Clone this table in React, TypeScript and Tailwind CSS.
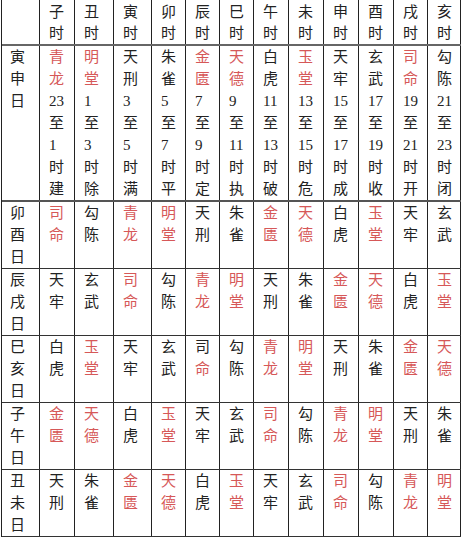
const hours = ["子", "丑", "寅", "卯", "辰", "巳", "午", "未", "申", "酉", "戌", "亥"];

const colClasses = [
  "w-[38px]",
  "w-[35px]",
  "w-[39px]",
  "w-[38px]",
  "w-[34px]",
  "w-[34px]",
  "w-[34px]",
  "w-[35px]",
  "w-[35px]",
  "w-[35px]",
  "w-[35px]",
  "w-[34px]",
  "w-[33px]",
];

// each cell: god name plus which of its two chars are red
type Cell = { god: string; red: string };

const R = (god: string): Cell => ({ god, red: "11" });
const B = (god: string): Cell => ({ god, red: "00" });

const firstRow = [
  { cell: R("青龙"), from: "23", to: "1", tail: "建" },
  { cell: R("明堂"), from: "1", to: "3", tail: "除" },
  { cell: B("天刑"), from: "3", to: "5", tail: "满" },
  { cell: B("朱雀"), from: "5", to: "7", tail: "平" },
  { cell: R("金匮"), from: "7", to: "9", tail: "定" },
  { cell: R("天德"), from: "9", to: "11", tail: "执" },
  { cell: B("白虎"), from: "11", to: "13", tail: "破" },
  { cell: R("玉堂"), from: "13", to: "15", tail: "危" },
  { cell: B("天牢"), from: "15", to: "17", tail: "成" },
  { cell: B("玄武"), from: "17", to: "19", tail: "收" },
  { cell: R("司命"), from: "19", to: "21", tail: "开" },
  { cell: B("勾陈"), from: "21", to: "23", tail: "闭" },
];

const rows: { label: string; cells: Cell[] }[] = [
  {
    label: "卯酉日",
    cells: [R("司命"), B("勾陈"), R("青龙"), R("明堂"), B("天刑"), B("朱雀"), R("金匮"), R("天德"), B("白虎"), R("玉堂"), B("天牢"), B("玄武")],
  },
  {
    label: "辰戌日",
    cells: [B("天牢"), B("玄武"), R("司命"), B("勾陈"), R("青龙"), R("明堂"), B("天刑"), B("朱雀"), R("金匮"), R("天德"), B("白虎"), R("玉堂")],
  },
  {
    label: "巳亥日",
    cells: [B("白虎"), R("玉堂"), B("天牢"), B("玄武"), { god: "司命", red: "01" }, B("勾陈"), R("青龙"), R("明堂"), B("天刑"), B("朱雀"), R("金匮"), R("天德")],
  },
  {
    label: "子午日",
    cells: [R("金匮"), R("天德"), B("白虎"), R("玉堂"), B("天牢"), B("玄武"), R("司命"), B("勾陈"), R("青龙"), R("明堂"), B("天刑"), B("朱雀")],
  },
  {
    label: "丑未日",
    cells: [B("天刑"), B("朱雀"), R("金匮"), R("天德"), B("白虎"), R("玉堂"), B("天牢"), B("玄武"), R("司命"), B("勾陈"), R("青龙"), R("明堂")],
  },
];

const GodLines = ({ cell }: { cell: Cell }) => (
  <>
    {cell.god.split("").map((ch, i) => (
      <div key={i} className={cell.red[i] === "1" ? "text-[#d65858]" : "text-[#222]"}>
        {ch}
      </div>
    ))}
  </>
);

export default function App() {
  return (
    <div
      className="w-[462px] h-[540px] bg-white overflow-hidden text-[15px] text-[#222]"
      style={{ fontFamily: '"Liberation Serif", "Noto Sans CJK SC", serif' }}
    >
      <div className="ml-[1px] w-[460px] border-l border-[#222]">
        {/* header */}
        <div className="flex border-b-2 border-[#666]">
          <div className={`${colClasses[0]} h-[44px] border-r border-[#222]`} />
          {hours.map((h, i) => (
            <div
              key={h}
              className={`${colClasses[i + 1]} h-[44px] pt-[2px] pl-[9px] leading-[21px] border-r border-[#222]`}
            >
              <div>{h}</div>
              <div>时</div>
            </div>
          ))}
        </div>

        {/* 寅申日 */}
        <div className="flex border-b-2 border-[#555]">
          <div className={`${colClasses[0]} pl-[8px] leading-[22px] border-r border-[#222]`}>
            <div>寅</div>
            <div>申</div>
            <div>日</div>
          </div>
          {firstRow.map((c, i) => (
            <div
              key={i}
              className={`${colClasses[i + 1]} pl-[9px] leading-[22px] border-r border-[#222]`}
            >
              <GodLines cell={c.cell} />
              <div>{c.from}</div>
              <div>至</div>
              <div>{c.to}</div>
              <div>时</div>
              <div>{c.tail}</div>
            </div>
          ))}
        </div>

        {rows.map((row) => (
          <div key={row.label} className="flex border-b border-[#333]">
            <div className={`${colClasses[0]} h-[66px] pl-[8px] leading-[22px] border-r border-[#222]`}>
              {row.label.split("").map((ch, i) => (
                <div key={i}>{ch}</div>
              ))}
            </div>
            {row.cells.map((c, i) => (
              <div
                key={i}
                className={`${colClasses[i + 1]} h-[66px] pl-[9px] leading-[22px] border-r border-[#222]`}
              >
                <GodLines cell={c} />
              </div>
            ))}
          </div>
        ))}
      </div>
    </div>
  );
}
